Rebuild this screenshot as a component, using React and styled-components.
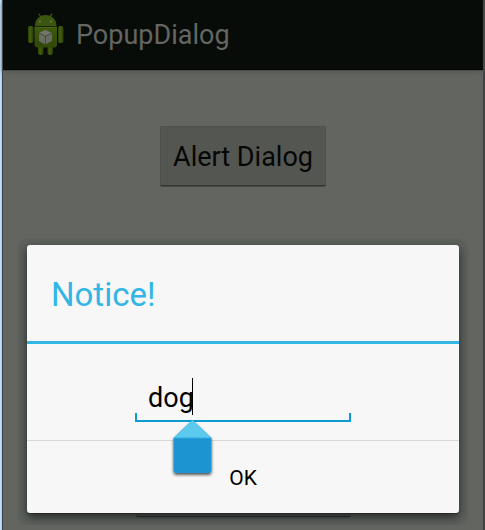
import React, { useState } from "react";
import styled, { createGlobalStyle } from "styled-components";

const GlobalStyle = createGlobalStyle`
  * { box-sizing: border-box; }
  body {
    margin: 0;
    font-family: Roboto, "Noto Sans", sans-serif;
    overflow: hidden;
  }
`;

const Frame = styled.div`
  display: flex;
  min-height: 100vh;
  background: #424342;
  padding-right: 2px;
`;

const WindowEdge = styled.div`
  flex: 0 0 3px;
  background: linear-gradient(to right, #c3e0fb 0 1px, #a9d0f5 1px 2px, #39464f 2px 3px);
`;

const Screen = styled.div`
  position: relative;
  flex: 1;
  display: flex;
  flex-direction: column;
  background: #636561;
`;

const ActionBar = styled.header`
  display: flex;
  align-items: center;
  gap: 12px;
  height: 70px;
  padding-left: 24px;
  background: #080c08;
  border-bottom: 1px solid #060605;
  box-shadow: 0 1px 0 #4b4d4a, 0 2px 5px #535851;
`;

const AppTitle = styled.h1`
  margin: 0;
  color: #646663;
  font-size: 27px;
  line-height: 32px;
  font-weight: 400;
`;

const Content = styled.main`
  flex: 1;
  display: flex;
  flex-direction: column;
  align-items: center;
  justify-content: space-between;
  padding: 56px 0 13px;
`;

const GreyButton = styled.button`
  min-width: ${(p) => p.$width || 0}px;
  height: 60px;
  padding: 2px 12px 0;
  border: 1px solid #4d504c;
  border-bottom: 1px solid #343634;
  border-radius: 2px;
  background: #545652;
  box-shadow: 0 1px 0 #484a47;
  color: #050705;
  font-family: inherit;
  font-size: 27px;
  line-height: 32px;
`;

const Dialog = styled.section`
  position: absolute;
  left: 24px;
  right: 24px;
  bottom: 17px;
  background: #f7f7f7;
  border-radius: 3px;
  box-shadow: 0 4px 10px rgba(0, 0, 0, 0.6), 0 1px 0 #4a4a4a,
    0 3px 1px 9px rgba(72, 88, 78, 0.25);
`;

const DialogTitle = styled.h2`
  display: flex;
  align-items: center;
  height: 99px;
  margin: 0;
  padding: 4px 24px 0;
  border-bottom: 3px solid #33b5e5;
  border-radius: 3px 3px 0 0;
  color: #33b5e5;
  font-size: 33px;
  line-height: 40px;
  font-weight: 400;
`;

const DialogBody = styled.div`
  display: flex;
  justify-content: center;
  align-items: flex-end;
  height: 96px;
  padding-bottom: 18px;
`;

const Field = styled.div`
  position: relative;
  width: 216px;

  &::after {
    content: "";
    position: absolute;
    inset: auto 0 0;
    height: 7px;
    border: 2px solid #0a9bd0;
    border-top: 0;
    pointer-events: none;
  }
`;

const TextInput = styled.input`
  display: block;
  width: 100%;
  height: 48px;
  padding: 0 13px;
  border: 0;
  outline: 0;
  background: transparent;
  color: #000;
  caret-color: transparent;
  font-family: inherit;
  font-size: 27px;
  line-height: 32px;
`;

const Caret = styled.span`
  position: absolute;
  left: 57px;
  bottom: 7px;
  width: 1px;
  height: 37px;
  background: #000;
`;

const CursorHandle = styled.svg`
  position: absolute;
  z-index: 1;
  left: 34px;
  top: 45px;
  width: 48px;
  height: 64px;
  pointer-events: none;
`;

const OkButton = styled.button`
  display: block;
  width: 100%;
  height: 73px;
  padding: 2px 0 0;
  border: 0;
  border-top: 1px solid #d9d9d9;
  border-radius: 0 0 3px 3px;
  background: transparent;
  color: #000;
  font-family: inherit;
  font-size: 21px;
  line-height: 24px;
`;

function AndroidIcon() {
  return (
    <svg width="37" height="44" viewBox="0 0 37 44" aria-hidden="true">
      <defs>
        <linearGradient id="body" x1="0" y1="0" x2="0" y2="1">
          <stop offset="0" stopColor="#3f5a10" />
          <stop offset="1" stopColor="#304708" />
        </linearGradient>
        <linearGradient id="limb" x1="0" y1="0" x2="1" y2="0">
          <stop offset="0" stopColor="#2c4208" />
          <stop offset="0.4" stopColor="#435e0f" />
          <stop offset="1" stopColor="#2a3e08" />
        </linearGradient>
      </defs>
      <path d="M14 4 11.800 1M22.500 4l2.500-3" stroke="#3c530f" strokeWidth="1.2" strokeLinecap="round" />
      <rect x="11" y="30" width="5.500" height="12" rx="2.700" fill="url(#limb)" />
      <rect x="20.500" y="30" width="5.500" height="12" rx="2.700" fill="url(#limb)" />
      <rect x="1" y="13" width="5.500" height="17" rx="2" fill="url(#limb)" />
      <rect x="31" y="13" width="5.500" height="17" rx="2" fill="url(#limb)" />
      <path d="M8 13C8 6 12.500 2 18.500 2S29.500 6 29.500 13Z" fill="#3c5610" />
      <path d="M7.500 14h22.500v17.500q0 3-3 3H10.500q-3 0-3-3Z" fill="url(#body)" />
      <path d="M7.500 13.500h22.500" stroke="#1d2c08" strokeWidth="0.8" />
      <path d="M7.500 14.500h22.500" stroke="#4b6718" strokeWidth="0.7" />
      <circle cx="13" cy="8.500" r="1.100" fill="#6d725f" />
      <circle cx="24" cy="8.500" r="1.100" fill="#6d725f" />
      <path d="m18.500 17 6.500 3v8l-6.500 3.500L12 28v-8Z" fill="#686c61" />
      <path d="m18.500 17 6.500 3-6.500 3.200L12 20Z" fill="#72766d" />
      <path d="m12 20 6.500 3.200L25 20M18.500 23.200V31.500" fill="none" stroke="#3b4a26" strokeWidth="0.9" />
    </svg>
  );
}

function Handle() {
  return (
    <CursorHandle viewBox="0 0 48 64" aria-hidden="true">
      <defs>
        <filter id="handleShadow" x="-20%" y="-20%" width="140%" height="150%">
          <feDropShadow dx="0" dy="2" stdDeviation="1.5" floodColor="#000" floodOpacity="0.65" />
        </filter>
        <clipPath id="handleShape">
          <path d="M23.500 1 42.500 19v32q0 3-3 3h-32q-3 0-3-3V19Z" />
        </clipPath>
      </defs>
      <g filter="url(#handleShadow)">
        <g clipPath="url(#handleShape)">
          <path d="M4 0h40v55H4Z" fill="#1b94d2" />
          <path d="M4 0h40v19H4Z" fill="#5bc9ef" />
          <path d="M4 18.500h40v1H4Z" fill="#35addf" />
        </g>
      </g>
    </CursorHandle>
  );
}

export default function App() {
  const [text, setText] = useState("dog");
  return (
    <>
      <GlobalStyle />
      <Frame>
        <WindowEdge />
        <Screen>
          <ActionBar>
            <AndroidIcon />
            <AppTitle>PopupDialog</AppTitle>
          </ActionBar>
          <Content>
            <GreyButton type="button">Alert Dialog</GreyButton>
            <GreyButton type="button" $width={215} aria-label="Open dialog" />
          </Content>
          <Dialog role="dialog" aria-labelledby="dialog-title">
            <DialogTitle id="dialog-title">Notice!</DialogTitle>
            <DialogBody>
              <Field>
                <TextInput
                  aria-labelledby="dialog-title"
                  value={text}
                  onChange={(e) => setText(e.target.value)}
                />
                <Caret />
                <Handle />
              </Field>
            </DialogBody>
            <OkButton type="button">OK</OkButton>
          </Dialog>
        </Screen>
      </Frame>
    </>
  );
}
